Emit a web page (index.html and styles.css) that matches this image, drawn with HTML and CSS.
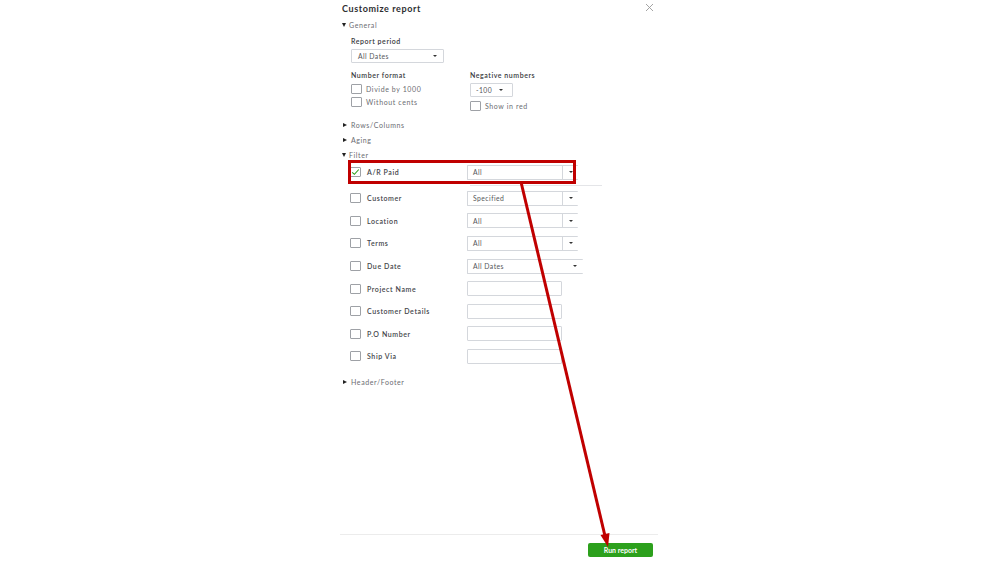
FILE: index.html
```html
<!DOCTYPE html>
<html>
<head>
<meta charset="utf-8">
<link rel="stylesheet" href="styles.css">
</head>
<body>
<div class="panel">
  <div class="content">
    <div class="header">
      <span class="title">Customize report</span>
      <svg class="close" width="9" height="9" viewBox="0 0 9 9"><path d="M1 1L8 8M8 1L1 8" stroke="#9a9a9a" stroke-width="0.9" fill="none"/></svg>
    </div>
    <div class="toggle first"><span class="tri down"></span>General</div>
    <div class="group">
      <div class="label">Report period</div>
      <div class="select period"><span>All Dates</span><span class="caret"></span></div>
      <div class="cols">
        <div class="col">
          <div class="label">Number format</div>
          <div class="check"><span class="box"></span>Divide by 1000</div>
          <div class="check"><span class="box"></span>Without cents</div>
        </div>
        <div class="col right">
          <div class="label">Negative numbers</div>
          <div class="select neg"><span>-100</span><span class="caret"></span></div>
          <div class="check red"><span class="box"></span>Show in red</div>
        </div>
      </div>
    </div>
    <div class="toggle rows"><span class="tri"></span>Rows/Columns</div>
    <div class="toggle aging"><span class="tri"></span>Aging</div>
    <div class="toggle"><span class="tri down"></span>Filter</div>
    <div class="filters">
      <div class="frow firstrow">
        <span class="box checked"><svg width="9" height="8" viewBox="0 0 9 8"><path d="M1.2 4.3L3.4 6.3L7.8 1.5" stroke="#2ca01c" stroke-width="1.1" fill="none"/></svg></span>
        <span class="fname">A/R Paid</span>
        <div class="dd"><span class="val">All</span><span class="arrow"><span class="caret"></span></span></div>
        <div class="highlight"></div>
      </div>
      <div class="frow"><span class="box"></span><span class="fname">Customer</span><div class="dd"><span class="val">Specified</span><span class="arrow"><span class="caret"></span></span></div></div>
      <div class="frow"><span class="box"></span><span class="fname">Location</span><div class="dd"><span class="val">All</span><span class="arrow"><span class="caret"></span></span></div></div>
      <div class="frow"><span class="box"></span><span class="fname">Terms</span><div class="dd"><span class="val">All</span><span class="arrow"><span class="caret"></span></span></div></div>
      <div class="frow"><span class="box"></span><span class="fname">Due Date</span><div class="dd wide"><span class="val">All Dates</span><span class="caret"></span></div></div>
      <div class="frow"><span class="box"></span><span class="fname">Project Name</span><div class="input"></div></div>
      <div class="frow"><span class="box"></span><span class="fname">Customer Details</span><div class="input"></div></div>
      <div class="frow"><span class="box"></span><span class="fname">P.O Number</span><div class="input"></div></div>
      <div class="frow"><span class="box"></span><span class="fname">Ship Via</span><div class="input"></div></div>
    </div>
    <div class="toggle hf"><span class="tri"></span>Header/Footer</div>
  </div>
  <div class="footer">
    <button class="run">Run report</button>
  </div>
</div>
<svg class="annot" width="999" height="562" viewBox="0 0 999 562">
  <line x1="521" y1="182" x2="605" y2="536" stroke="#c00000" stroke-width="3"/>
  <path d="M600.5 535L609.5 533L608 547Z" fill="#c00000"/>
</svg>
</body>
</html>
```

FILE: styles.css
```css
html, body {
  margin: 0;
  padding: 0;
  background: #ffffff;
}
body {
  width: 999px;
  height: 562px;
  overflow: hidden;
  position: relative;
  font-family: "Lato", "Open Sans", sans-serif;
  color: #393a3d;
}
.panel {
  margin-left: 340px;
  width: 318px;
  height: 562px;
  display: flex;
  flex-direction: column;
}
.content {
  flex: 1;
  padding-left: 2px;
}
.header {
  height: 16px;
  display: flex;
  justify-content: space-between;
  align-items: center;
  padding-right: 4px;
}
.title {
  font-size: 9px;
  font-weight: 700;
  letter-spacing: 0.6px;
  color: #2d2e31;
}
.close {
  margin-top: -2px;
}
.toggle {
  height: 14px;
  line-height: 14px;
  font-size: 7px;
  letter-spacing: 0.6px;
  color: #6b6c72;
  display: flex;
  align-items: center;
}
.toggle.first {
  margin-top: 2px;
}
.tri {
  width: 0;
  height: 0;
  border-top: 2.5px solid transparent;
  border-bottom: 2.5px solid transparent;
  border-left: 4px solid #222;
  margin: 0 4px 0 1px;
}
.tri.down {
  border-left: 2.5px solid transparent;
  border-right: 2.5px solid transparent;
  border-top: 4px solid #222;
  border-bottom: 0;
  margin: 0 3px 0 0;
}
.group {
  padding-left: 9px;
}
.label {
  height: 14px;
  line-height: 14px;
  font-size: 7px;
  font-weight: 600;
  letter-spacing: 0.55px;
  color: #393a3d;
  margin-top: 2px;
}
.select {
  height: 14px;
  box-sizing: border-box;
  border: 1px solid #d4d7dc;
  border-radius: 1px;
  display: flex;
  align-items: center;
  justify-content: space-between;
  font-size: 6.8px;
  letter-spacing: 0.45px;
  color: #55565a;
  padding: 0 6px 0 6px;
  margin-top: 1px;
}
.select.period {
  width: 93px;
}
.caret {
  width: 0;
  height: 0;
  border-left: 2.2px solid transparent;
  border-right: 2.2px solid transparent;
  border-top: 2.6px solid #333;
}
.cols {
  display: flex;
  margin-top: 3px;
}
.col {
  width: 119px;
}
.col.right {
  width: 120px;
}
.check {
  display: flex;
  align-items: center;
  height: 11px;
  font-size: 7px;
  letter-spacing: 0.6px;
  color: #6b6c72;
  margin-top: 1px;
}
.check .box {
  margin-right: 4px;
}
.box {
  width: 11px;
  height: 10px;
  box-sizing: border-box;
  border: 1px solid #9ea1a6;
  border-radius: 1px;
  flex: none;
  display: flex;
  align-items: center;
  justify-content: center;
}
.col .check + .check {
  margin-top: 2px;
}
.select.neg {
  width: 43px;
  margin-top: 1px;
  padding: 0 9px 0 5px;
}
.col .check.red {
  margin-top: 3px;
}
.toggle.rows {
  margin-top: 7px;
  height: 14px;
}
.toggle.aging {
  height: 16px;
}
.filters {
  padding-left: 8px;
  margin-top: -2px;
}
.frow {
  position: relative;
  height: 22.6px;
  display: flex;
  align-items: center;
}
.frow.firstrow {
  height: 24px;
  margin-bottom: 3px;
}
.frow.firstrow::after {
  content: "";
  position: absolute;
  left: 120px;
  top: 25px;
  width: 132px;
  height: 1px;
  background: #e4e5e8;
}
.fname {
  width: 100px;
  margin-left: 6px;
  font-size: 7px;
  font-weight: 600;
  letter-spacing: 0.6px;
  color: #44454a;
}
.dd {
  width: 111px;
  height: 15px;
  box-sizing: border-box;
  border: 1px solid #d4d7dc;
  border-right: 0;
  border-radius: 1px;
  display: flex;
  align-items: center;
  font-size: 6.8px;
  letter-spacing: 0.45px;
  color: #55565a;
}
.dd .val {
  flex: 1;
  padding-left: 5px;
  border-right: 1px solid #d4d7dc;
  height: 100%;
  display: flex;
  align-items: center;
}
.dd .arrow {
  width: 15px;
  display: flex;
  justify-content: center;
}
.dd.wide {
  width: 116px;
  padding-right: 6px;
}
.dd.wide .val {
  border-right: 0;
}
.input {
  width: 95px;
  height: 15px;
  box-sizing: border-box;
  border: 1px solid #d4d7dc;
  border-radius: 1px;
}
.highlight {
  position: absolute;
  left: -2px;
  top: 0;
  width: 228px;
  height: 24px;
  box-sizing: border-box;
  border: 3px solid #c00000;
}
.toggle.hf {
  margin-top: 7px;
}
.footer {
  height: 28px;
  border-top: 1px solid #ececec;
  display: flex;
  justify-content: flex-end;
  align-items: flex-start;
  padding: 8px 5px 0 0;
  box-sizing: border-box;
}
.run {
  width: 65px;
  height: 14px;
  background: #2ca01c;
  border: 0;
  border-radius: 2px;
  color: #ffffff;
  font-family: "Lato", sans-serif;
  font-size: 7px;
  font-weight: 700;
  padding: 0;
}
.annot {
  position: absolute;
  left: 0;
  top: 0;
  pointer-events: none;
}
```
